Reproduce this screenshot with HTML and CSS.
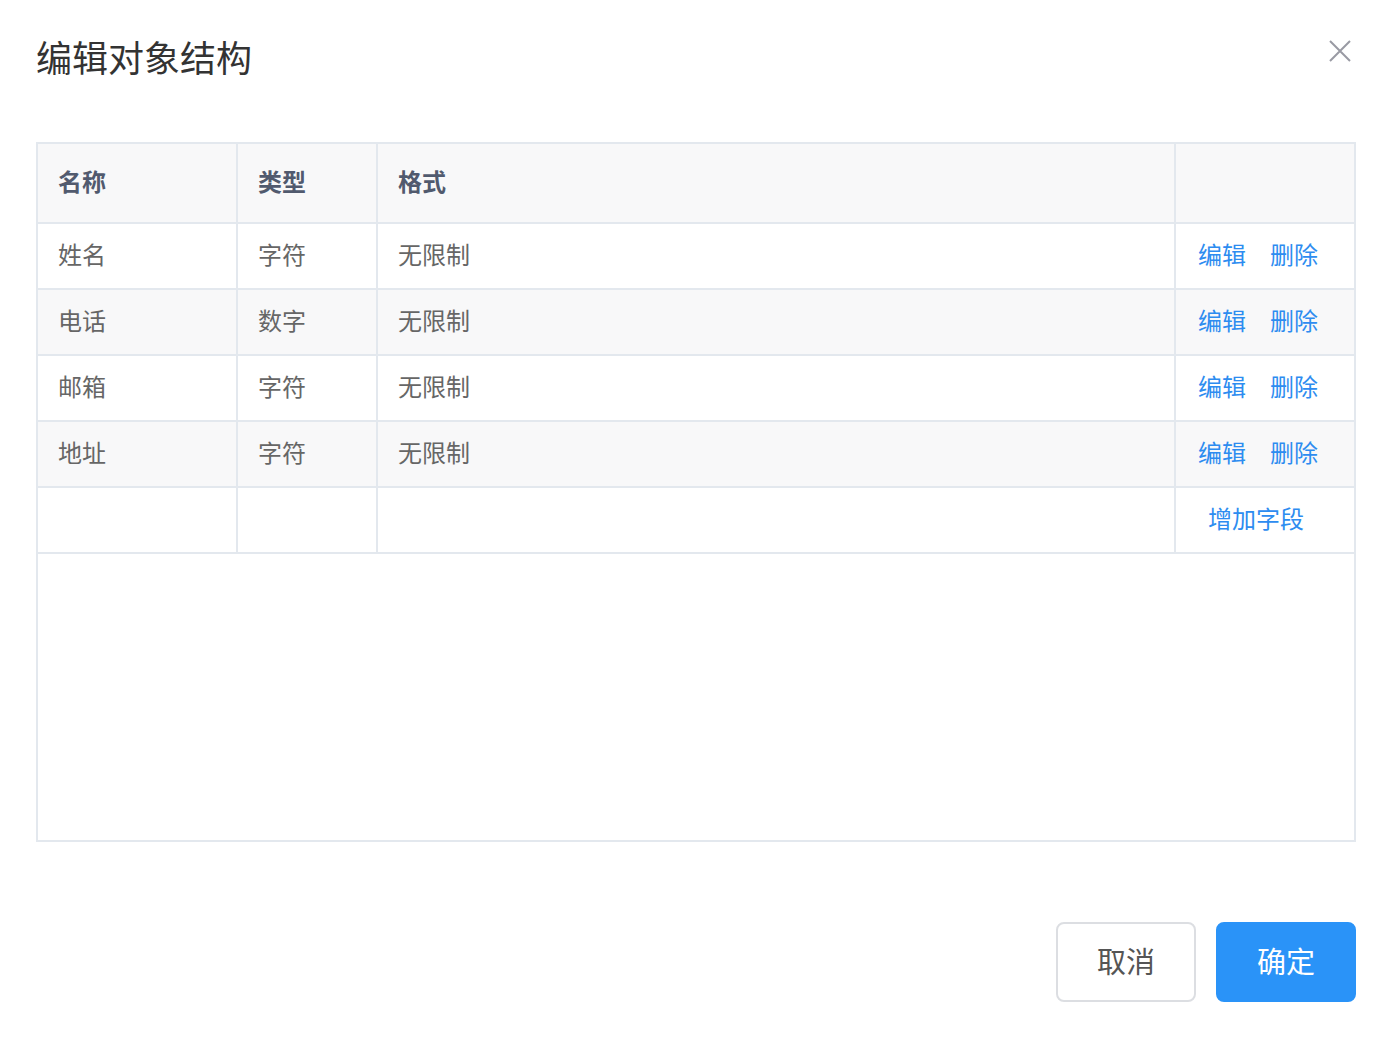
FILE: index.html
```html
<!DOCTYPE html>
<html lang="zh-CN">

<head>
    <meta charset="UTF-8">
    <meta name="viewport" content="width=device-width, initial-scale=1.0">
    <title>编辑对象结构</title>
    <link rel="stylesheet" href="styles.css">
</head>

<body>
    <div class="modal">
        <div class="cabecalho">
            <h1>编辑对象结构</h1>
            <span class="fechar">
                <svg width="22" height="22" viewBox="0 0 22 22"><path d="M1 1L21 21M21 1L1 21" stroke="#999aa3" stroke-width="2" fill="none"/></svg>
            </span>
        </div>

        <div class="tabela-box">
            <table class="tabela">
                <colgroup>
                    <col style="width: 199px">
                    <col style="width: 140px">
                    <col>
                    <col style="width: 179px">
                </colgroup>
                <tr class="titulo">
                    <th>名称</th>
                    <th>类型</th>
                    <th>格式</th>
                    <th></th>
                </tr>
                <tr>
                    <td>姓名</td>
                    <td>字符</td>
                    <td>无限制</td>
                    <td class="acoes"><a>编辑</a><a>删除</a></td>
                </tr>
                <tr class="listra">
                    <td>电话</td>
                    <td>数字</td>
                    <td>无限制</td>
                    <td class="acoes"><a>编辑</a><a>删除</a></td>
                </tr>
                <tr>
                    <td>邮箱</td>
                    <td>字符</td>
                    <td>无限制</td>
                    <td class="acoes"><a>编辑</a><a>删除</a></td>
                </tr>
                <tr class="listra">
                    <td>地址</td>
                    <td>字符</td>
                    <td>无限制</td>
                    <td class="acoes"><a>编辑</a><a>删除</a></td>
                </tr>
                <tr>
                    <td></td>
                    <td></td>
                    <td></td>
                    <td class="acoes add"><a>增加字段</a></td>
                </tr>
            </table>
        </div>

        <div class="rodape">
            <button class="botao">取消</button>
            <button class="botao primario">确定</button>
        </div>
    </div>
</body>

</html>
```

FILE: styles.css
```css
* {
    margin: 0;
    padding: 0;
    box-sizing: border-box;
}

body {
    background: #fff;
    font-family: "Noto Sans CJK SC", "Noto Sans", sans-serif;
}

.modal {
    padding: 0 40px 0 36px;
}

.cabecalho {
    display: flex;
    justify-content: space-between;
    align-items: center;
    height: 118px;
    padding-bottom: 2px;
}

.cabecalho h1 {
    font-size: 36px;
    font-weight: normal;
    color: #333;
    margin-top: -4px;
}

.fechar {
    display: flex;
    margin-right: 5px;
    margin-top: -14px;
}

.tabela-box {
    height: 700px;
    border: 2px solid #e3e8ee;
    margin-top: 24px;
}

.tabela {
    width: 100%;
    border-collapse: collapse;
    table-layout: fixed;
    font-size: 24px;
    line-height: 1.2;
}

.tabela th,
.tabela td {
    text-align: left;
    padding: 0 0 4px 20px;
    border-right: 2px solid #e3e8ee;
    border-bottom: 2px solid #e3e8ee;
}

.tabela th:last-child,
.tabela td:last-child {
    border-right: none;
}

.titulo th {
    height: 79px;
    background: #f8f8f9;
    color: #515a6e;
    font-weight: bold;
}

.tabela td {
    height: 66px;
    color: #666;
}

.listra td {
    background: #f8f8f9;
}

.tabela td.acoes {
    padding-left: 22px;
}

.acoes a {
    color: #2d8cf0;
    margin-right: 24px;
    cursor: pointer;
}

.tabela td.acoes.add {
    padding-left: 32px;
}

.rodape {
    display: flex;
    justify-content: flex-end;
    gap: 20px;
    margin-top: 80px;
}

.botao {
    width: 140px;
    height: 80px;
    padding-bottom: 5px;
    font-family: inherit;
    font-size: 29px;
    border-radius: 8px;
    border: 2px solid #dcdee2;
    background: #fff;
    color: #555;
    cursor: pointer;
}

.botao.primario {
    background: #2a93f8;
    border-color: #2a93f8;
    color: #fff;
}
```
